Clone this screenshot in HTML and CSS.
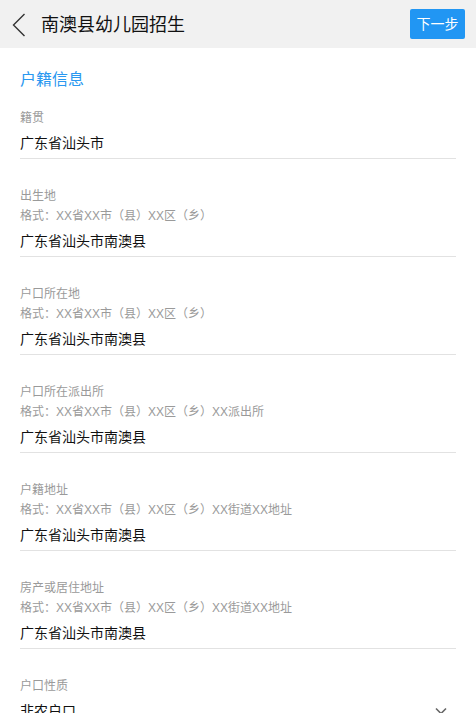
FILE: index.html
```html
<!DOCTYPE html>
<html lang="zh">
<head>
<meta charset="utf-8">
<title>南澳县幼儿园招生</title>
<link rel="stylesheet" href="styles.css">
</head>
<body>
<header class="topbar">
  <button class="back" aria-label="返回">
    <svg width="14" height="24" viewBox="0 0 14 24"><path d="M12.5 1 L1.5 12 L12.5 23" fill="none" stroke="#333" stroke-width="1.4"/></svg>
  </button>
  <h1 class="title">南澳县幼儿园招生</h1>
  <button class="next">下一步</button>
</header>
<main class="content">
  <h2 class="section-title">户籍信息</h2>
  <div class="field">
    <div class="label">籍贯</div>
    <div class="value">广东省汕头市</div>
  </div>
  <div class="field">
    <div class="label">出生地</div>
    <div class="hint">格式：XX省XX市（县）XX区（乡）</div>
    <div class="value">广东省汕头市南澳县</div>
  </div>
  <div class="field">
    <div class="label">户口所在地</div>
    <div class="hint">格式：XX省XX市（县）XX区（乡）</div>
    <div class="value">广东省汕头市南澳县</div>
  </div>
  <div class="field">
    <div class="label">户口所在派出所</div>
    <div class="hint">格式：XX省XX市（县）XX区（乡）XX派出所</div>
    <div class="value">广东省汕头市南澳县</div>
  </div>
  <div class="field">
    <div class="label">户籍地址</div>
    <div class="hint">格式：XX省XX市（县）XX区（乡）XX街道XX地址</div>
    <div class="value">广东省汕头市南澳县</div>
  </div>
  <div class="field">
    <div class="label">房产或居住地址</div>
    <div class="hint">格式：XX省XX市（县）XX区（乡）XX街道XX地址</div>
    <div class="value">广东省汕头市南澳县</div>
  </div>
  <div class="field">
    <div class="label">户口性质</div>
    <div class="value select">
      <span>非农户口</span>
      <svg class="caret" width="12" height="8" viewBox="0 0 12 8"><path d="M1 1.5 L6 6.5 L11 1.5" fill="none" stroke="#666" stroke-width="1.6"/></svg>
    </div>
  </div>
</main>
</body>
</html>
```

FILE: styles.css
```css
* { box-sizing: border-box; }
html, body { margin: 0; padding: 0; }
body {
  background: #fff;
  font-family: "Noto Sans", "Noto Sans CJK SC", sans-serif;
  color: #111;
  width: 476px;
  height: 713px;
  overflow: hidden;
}
.topbar {
  height: 48px;
  background: #f1f1f1;
  display: flex;
  align-items: center;
  padding: 0 11px 0 12px;
}
.back {
  border: 0;
  background: none;
  padding: 0;
  width: 14px;
  height: 24px;
  display: flex;
  align-items: center;
  margin-top: 1px;
}
.title {
  margin: 0 0 0 15px;
  font-size: 18px;
  font-weight: normal;
  color: #111;
  flex: 1;
  line-height: 24px;
}
.next {
  border: 0;
  background: #2196f3;
  color: #fff;
  font-family: inherit;
  font-size: 14px;
  width: 55px;
  height: 30px;
  border-radius: 2px;
  padding: 0;
  margin-top: -1px;
  line-height: 30px;
}
.content {
  padding: 0 20px;
}
.section-title {
  margin: 0;
  padding-top: 19px;
  font-size: 16px;
  font-weight: normal;
  line-height: 24px;
  color: #2a98f0;
}
.field {
  padding-top: 27px;
  border-bottom: 1px solid #e2e2e2;
}
.section-title + .field { padding-top: 17px; }
.label, .hint {
  font-size: 12px;
  line-height: 20px;
  color: #9a9a9a;
}
.hint {
  font-family: "Liberation Sans", "Noto Sans CJK SC", sans-serif;
}
.value {
  font-size: 14px;
  line-height: 30px;
  height: 30px;
  color: #111;
}
.select {
  display: flex;
  align-items: center;
  justify-content: space-between;
  padding-right: 9px;
}
```
